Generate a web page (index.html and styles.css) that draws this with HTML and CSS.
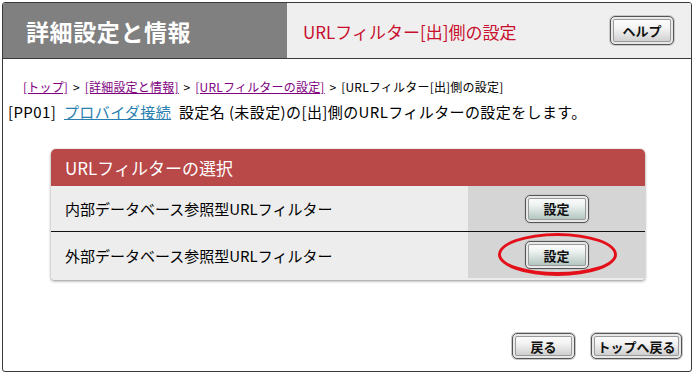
FILE: index.html
```html
<!DOCTYPE html>
<html lang="ja">
<head>
<meta charset="utf-8">
<link rel="stylesheet" href="styles.css">
</head>
<body>
<div class="frame">
  <div class="header">
    <div class="title">詳細設定と情報</div>
    <div class="subtitle">
      <span class="subtitle-text">URLフィルター[出]側の設定</span>
      <button class="btn btn-help">ヘルプ</button>
    </div>
  </div>
  <div class="content">
    <div class="breadcrumb">
      <a href="#" class="crumb">[トップ]</a> &gt; <a href="#" class="crumb">[詳細設定と情報]</a> &gt; <a href="#" class="crumb">[URLフィルターの設定]</a> &gt; [URLフィルター[出]側の設定]
    </div>
    <div class="desc">[PP01] <a href="#" class="plink">プロバイダ接続</a> 設定名 (未設定)の[出]側のURLフィルターの設定をします。</div>
    <div class="panel">
      <div class="panel-head">URLフィルターの選択</div>
      <div class="row">
        <div class="row-label">内部データベース参照型URLフィルター</div>
        <div class="row-action"><button class="btn btn-set">設定</button></div>
      </div>
      <div class="row row-last">
        <div class="row-label">外部データベース参照型URLフィルター</div>
        <div class="row-action">
          <button class="btn btn-set">設定</button>
          <span class="circle"></span>
        </div>
      </div>
    </div>
    <div class="footer">
      <button class="btn btn-foot btn-back">戻る</button>
      <button class="btn btn-foot btn-top">トップへ戻る</button>
    </div>
  </div>
</div>
</body>
</html>
```
FILE: styles.css
```css
* { box-sizing: border-box; }
html, body { margin: 0; padding: 0; background: #fff; }
body {
  font-family: "Noto Sans CJK JP", "Noto Sans", sans-serif;
  color: #000;
}
.frame {
  margin: 2px 0 0 2px;
  width: 690px;
  height: 370px;
  border: 1px solid #3a3a3a;
  border-radius: 3px;
  overflow: hidden;
  display: flex;
  flex-direction: column;
}
.header {
  display: flex;
  height: 56px;
  border-bottom: 1px solid #3a3a3a;
  flex: none;
}
.title {
  width: 284px;
  background: #808080;
  color: #fff;
  font-weight: bold;
  font-size: 23px;
  padding-left: 23px;
  display: flex;
  align-items: center;
  letter-spacing: 0.6px;
}
.subtitle {
  flex: 1;
  background: #efefef;
  display: flex;
  align-items: center;
  justify-content: space-between;
  padding: 0 17px 0 16px;
}
.subtitle-text {
  color: #c8102e;
  font-size: 17px;
  margin-top: 1px;
}
.btn {
  font-family: "Noto Sans CJK JP", sans-serif;
  font-weight: bold;
  color: #111;
  border: 1px solid #555;
  border-radius: 5px;
  padding: 0;
  cursor: pointer;
  box-shadow: inset 0 0 0 2px #e8e8e8, inset 0 0 0 3px #9a9a9a, 0 0 0 1px #c8c8c8;
}
.btn-help {
  width: 64px;
  height: 29px;
  font-size: 13px;
  background: linear-gradient(#ffffff, #f4f4f4 40%, #c9c9c9);
}
.content {
  flex: 1;
  display: flex;
  flex-direction: column;
  padding: 20px 0 0 0;
}
.breadcrumb {
  font-size: 12px;
  padding-left: 20px;
  line-height: 16px;
  letter-spacing: 0.2px;
  word-spacing: 2px;
}
.crumb { color: #800080; text-decoration: underline; }
.desc {
  font-size: 15px;
  padding-left: 5px;
  margin-top: 7px;
  line-height: 19px;
  letter-spacing: 0.4px;
}
.plink { color: #2a7fb0; text-decoration: underline; margin: 0 4px; }
.panel {
  margin: 28px 0 0 48px;
  width: 594px;
  border-radius: 5px 5px 3px 3px;
  box-shadow: 0 1px 3px rgba(0,0,0,0.45);
  background: #ededed;
}
.panel-head {
  height: 37px;
  background: #b94848;
  color: #fff;
  font-size: 17px;
  padding-left: 14px;
  display: flex;
  align-items: center;
  border-radius: 5px 5px 0 0;
}
.row {
  display: flex;
  height: 46px;
  border-bottom: 1px solid #111;
}
.row-last { border-bottom: none; height: 46px; margin-bottom: 2px; }
.row-label {
  flex: 1;
  font-size: 15px;
  padding-left: 14px;
  display: flex;
  align-items: center;
}
.row-action {
  width: 177px;
  background: #d5d5d5;
  display: flex;
  align-items: center;
  justify-content: center;
  position: relative;
}
.btn-set {
  width: 64px;
  height: 28px;
  font-size: 13px;
  background: linear-gradient(#ffffff, #eef3f1 35%, #a7bcb7);
}
.circle {
  position: absolute;
  left: 30px;
  top: 1px;
  width: 119px;
  height: 43px;
  border: 3px solid #e3101a;
  border-bottom-width: 4px;
  border-radius: 50%;
  pointer-events: none;
}
.footer {
  margin-top: auto;
  display: flex;
  justify-content: flex-end;
  gap: 16px;
  padding: 0 9px 12px 0;
}
.btn-foot {
  height: 26px;
  font-size: 13px;
  background: linear-gradient(#ffffff, #f2f2f2 40%, #c6c6c6);
}
.btn-back { width: 63px; }
.btn-top { width: 91px; }
```
